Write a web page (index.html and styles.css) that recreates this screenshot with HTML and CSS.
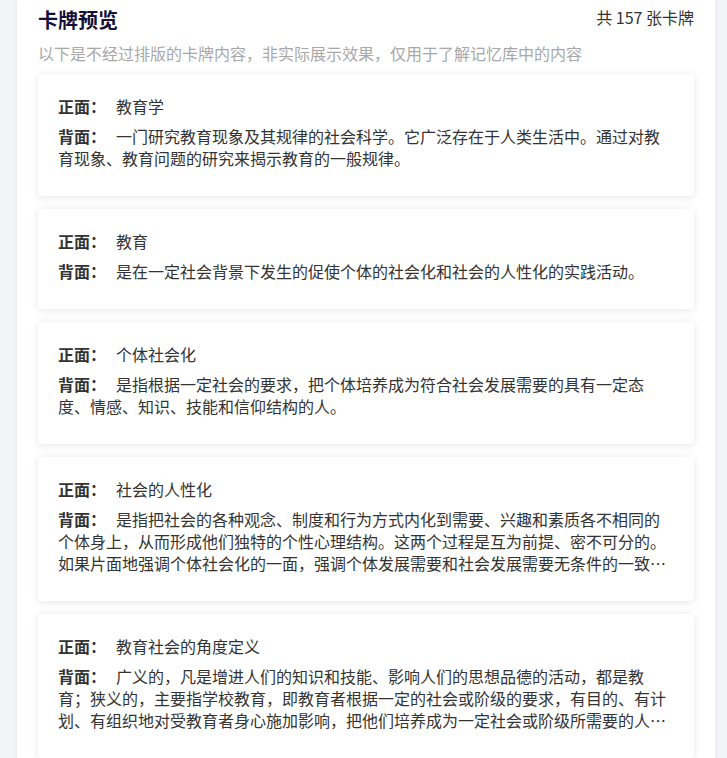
FILE: index.html
```html
<!DOCTYPE html>
<html lang="zh-CN">
<head>
    <meta charset="UTF-8">
    <meta name="viewport" content="width=device-width, initial-scale=1.0">
    <title>卡牌预览</title>
    <link rel="stylesheet" href="styles.css">
</head>
<body>

    <div class="panel">
        <div class="header">
            <h2 class="title">卡牌预览</h2>
            <span class="count">共 157 张卡牌</span>
        </div>
        <p class="tip">以下是不经过排版的卡牌内容，非实际展示效果，仅用于了解记忆库中的内容</p>

        <div class="card-list">
            <div class="card">
                <p class="front"><strong>正面：</strong>教育学</p>
                <p class="back"><strong>背面：</strong>一门研究教育现象及其规律的社会科学。它广泛存在于人类生活中。通过对教育现象、教育问题的研究来揭示教育的一般规律。</p>
            </div>
            <div class="card">
                <p class="front"><strong>正面：</strong>教育</p>
                <p class="back"><strong>背面：</strong>是在一定社会背景下发生的促使个体的社会化和社会的人性化的实践活动。</p>
            </div>
            <div class="card">
                <p class="front"><strong>正面：</strong>个体社会化</p>
                <p class="back"><strong>背面：</strong>是指根据一定社会的要求，把个体培养成为符合社会发展需要的具有一定态度、情感、知识、技能和信仰结构的人。</p>
            </div>
            <div class="card">
                <p class="front"><strong>正面：</strong>社会的人性化</p>
                <p class="back"><strong>背面：</strong>是指把社会的各种观念、制度和行为方式内化到需要、兴趣和素质各不相同的个体身上，从而形成他们独特的个性心理结构。这两个过程是互为前提、密不可分的。如果片面地强调个体社会化的一面，强调个体发展需要和社会发展需要无条件的一致性，就会忽视个体的独特性和创造性。</p>
            </div>
            <div class="card">
                <p class="front"><strong>正面：</strong>教育社会的角度定义</p>
                <p class="back"><strong>背面：</strong>广义的，凡是增进人们的知识和技能、影响人们的思想品德的活动，都是教育；狭义的，主要指学校教育，即教育者根据一定的社会或阶级的要求，有目的、有计划、有组织地对受教育者身心施加影响，把他们培养成为一定社会或阶级所需要的人的活动。</p>
            </div>
        </div>
    </div>

</body>
</html>
```

FILE: styles.css
```css
body {
    margin: 0;
    background-color: #f3f4f8;
    font-family: "Noto Sans CJK SC", "Noto Sans", sans-serif;
    color: #333;
}

.panel {
    margin: 0 12px 0 17px;
    padding: 8px 21px 20px;
    background-color: #fff;
    box-shadow: 0 0 6px rgba(0, 0, 0, 0.05);
    min-height: 100vh;
    box-sizing: border-box;
}

.header {
    display: flex;
    justify-content: space-between;
    align-items: flex-start;
}

.title {
    margin: 0;
    font-size: 20px;
    line-height: 24px;
    font-weight: bold;
    color: #14103a;
}

.count {
    font-size: 16px;
    line-height: 18px;
    color: #333;
}

.tip {
    margin: 10px 0 10px;
    font-size: 16px;
    line-height: 22px;
    color: #a8a8a8;
}

.card-list {
    display: flex;
    flex-direction: column;
    gap: 13px;
}

.card {
    padding: 21px 20px 20px;
    background-color: #fff;
    border-radius: 4px;
    box-shadow: 0 1px 8px rgba(0, 0, 0, 0.1);
}

.card p {
    margin: 0 0 8px;
    font-size: 16px;
    line-height: 22px;
}

.card .back {
    margin-bottom: 7px;
}

.card strong {
    margin-right: 10px;
    font-weight: bold;
}

.back {
    display: -webkit-box;
    -webkit-box-orient: vertical;
    -webkit-line-clamp: 3;
    overflow: hidden;
}
```
